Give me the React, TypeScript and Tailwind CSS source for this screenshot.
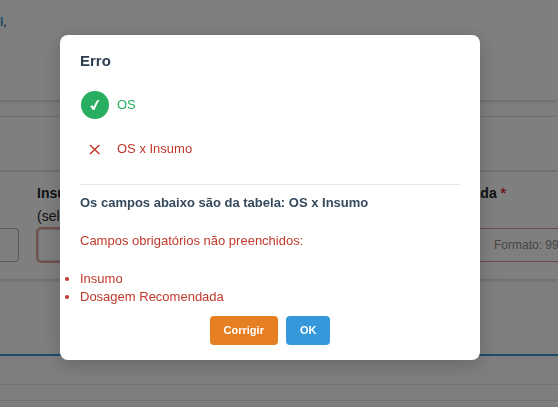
import type { ReactNode } from 'react';

const missingFields = ['Insumo', 'Dosagem Recomendada'];

interface StatusRowProps {
  label: string;
  ok: boolean;
}

function StatusRow({ label, ok }: StatusRowProps) {
  return (
    <li className={ok ? 'flex items-center gap-2 text-[#27ae60]' : 'flex items-center gap-2 text-[#c0392b]'}>
      <span className={ok ? 'flex size-7 items-center justify-center rounded-full bg-[#27ae60]' : 'flex size-7 items-center justify-center'}>
        {ok ? (
          <svg viewBox="0 0 12 12" className="size-3" aria-hidden="true">
            <path d="M1.2 7.4 3.4 6 4.7 7.9C5.8 5.2 7 2.8 8.4 1L10.4 1.3C8.4 4 7 7.2 5.8 10.6L3.6 10.9C3 9.5 2.2 8.4 1.2 7.4Z" fill="#fff" />
          </svg>
        ) : (
          <svg viewBox="0 0 12 12" className="size-3" fill="none" stroke="currentColor" strokeWidth="1.5" aria-hidden="true">
            <path d="M1 2 10.4 11M10.4 2 1 11" />
          </svg>
        )}
      </span>
      <span>{label}</span>
    </li>
  );
}

function Section({ children }: { children: ReactNode }) {
  return <section className="border-y border-[#dfe1e6] bg-white shadow-sm">{children}</section>;
}

function FormPage() {
  return (
    <div className="h-screen overflow-hidden bg-[#fdfdfd] text-sm text-[#212529]">
      <header className="h-[101px] border-b border-[#dfe1e6] bg-white pt-3 shadow-sm">
        <p className="text-xs leading-5">
          <a href="#" className="font-bold text-[#3498db]">l</a>,
        </p>
      </header>

      <div className="mt-[15px]">
        <Section>
          <div className="h-[53px]" />
          <form className="flex gap-[18px] border-t-2 border-[#e4e4e4] pt-2.5 pb-[17px]">
            <div className="w-[19px] shrink-0 pt-[46px]">
              <input aria-label="Código" className="h-[34px] w-full rounded-r border border-l-0 border-[#b4b4b4] bg-white" />
            </div>
            <div className="w-[346px] shrink-0">
              <label htmlFor="insumo" className="block leading-[23px]">
                <span className="font-bold">Insumo</span>
                <br />
                (selecione)
              </label>
              <input id="insumo" className="h-[34px] w-full rounded border border-[#e9a09a] bg-white ring-1 ring-[#e9a09a] inset-ring inset-ring-[#d4d4d4]" />
            </div>
            <div className="w-[400px] shrink-0">
              <label htmlFor="dosagem" className="block h-[46px] leading-[23px] font-bold">
                Recomendada <span className="text-[#dc3545]">*</span>
              </label>
              <input
                id="dosagem"
                placeholder="Formato: 99.99"
                className="h-[34px] w-full rounded border border-[#e08e88] bg-white pl-[92px] text-xs placeholder:text-[#8c8c8c]"
              />
            </div>
          </form>
        </Section>
      </div>

      <div className="mt-[74px] border-t-2 border-[#3498db]">
        <div className="h-7" />
        <div className="h-[17px] border-y border-[#e4e4e4]" />
      </div>
    </div>
  );
}

export default function App() {
  return (
    <main className="relative font-['Liberation_Sans',Arial,sans-serif]">
      <FormPage />
      <div className="fixed inset-0 flex items-center justify-center bg-black/50 pr-[18px] pb-3">
        <div
          role="dialog"
          aria-modal="true"
          aria-labelledby="dialog-title"
          className="w-full max-w-[420px] rounded-lg bg-white px-5 pt-4 pb-[15px] text-[13px] leading-[18px] shadow-[0_4px_20px_rgba(0,0,0,0.2)]"
        >
          <h2 id="dialog-title" className="text-[15px] leading-5 font-bold text-[#2c3e50]">Erro</h2>

          <div className="mt-5 border-b border-[#e5e5e5] px-px pb-[21px]">
            <ul className="space-y-4">
              <StatusRow label="OS" ok />
              <StatusRow label="OS x Insumo" ok={false} />
            </ul>
          </div>

          <p className="mt-[9px] font-bold text-[#34495e]">Os campos abaixo são da tabela: OS x Insumo</p>
          <div className="text-[#c0392b]">
            <p className="my-5">Campos obrigatórios não preenchidos:</p>
            <ul className="list-disc">
              {missingFields.map((field) => (
                <li key={field}>{field}</li>
              ))}
            </ul>
          </div>

          <div className="mt-2.5 flex justify-center gap-2 text-[11px] leading-[13px] font-bold text-white">
            <button type="button" className="rounded bg-[#e67e22] px-3.5 py-2">Corrigir</button>
            <button type="button" className="rounded bg-[#3498db] px-3.5 py-2">OK</button>
          </div>
        </div>
      </div>
    </main>
  );
}
